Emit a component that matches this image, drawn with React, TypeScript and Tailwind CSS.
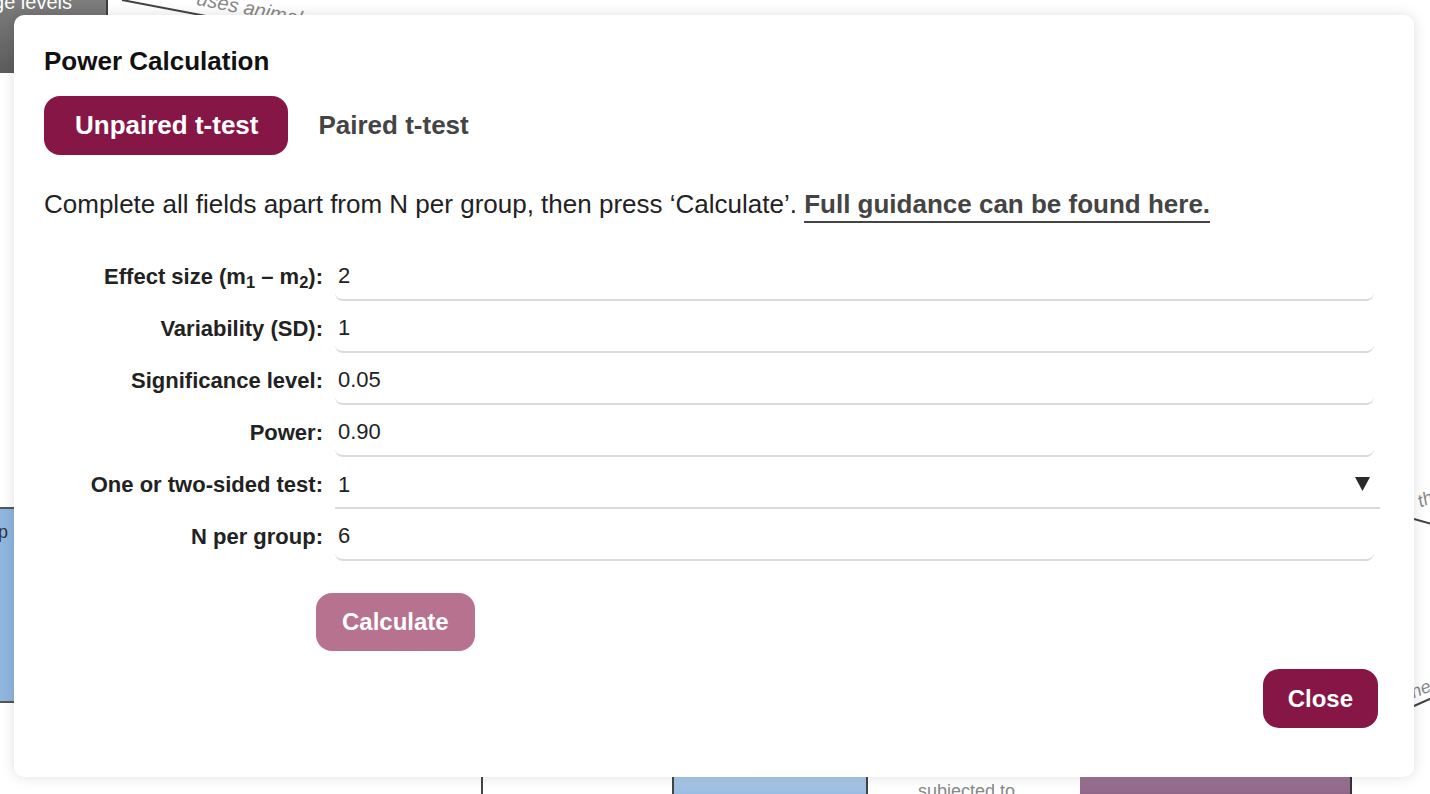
import React from "react";

const fields = [
  {
    label: (
      <>
        Effect size (m<sub>1</sub> – m<sub>2</sub>):
      </>
    ),
    value: "2",
  },
  { label: "Variability (SD):", value: "1" },
  { label: "Significance level:", value: "0.05" },
  { label: "Power:", value: "0.90" },
  { label: "One or two-sided test:", value: "1", select: true },
  { label: "N per group:", value: "6" },
];

const Backdrop = () => {
  return (
    <div className="absolute inset-0">
      {/* diagram nodes behind the dialog */}
      <div className="absolute left-0 top-[-30px] h-[103px] w-[108px] border-r-2 border-[#3f3f3f] bg-gradient-to-b from-[#8c8c8c] to-[#5c5c5c]">
        <div className="absolute left-[-50px] top-[22px] w-[122px] text-right text-[20px] leading-[20px] text-white">
          age levels
        </div>
      </div>
      <div className="absolute left-[-100px] top-[507px] h-[196px] w-[114px] border-y-2 border-[#555] bg-[#8fb6de]">
        <div className="absolute left-[40px] top-[10px] w-[68px] text-right text-[18px] text-[#333]">
          group
        </div>
      </div>
      <div className="absolute left-[672px] top-[770px] h-[40px] w-[196px] border-x-2 border-[#444] bg-gradient-to-b from-[#b2cdea] to-[#8ab2dc]" />
      <div className="absolute left-[1080px] top-[770px] h-[40px] w-[272px] border-r-2 border-[#333] bg-gradient-to-b from-[#a07c98] to-[#85587d]" />
      <div className="absolute left-[918px] top-[778px] text-[18px] text-[#888]">subjected to</div>
      <div className="absolute left-[196px] top-[-6px] rotate-[11deg] text-[20px] italic text-[#888]">
        uses animals
      </div>
      <div className="absolute left-[1418px] top-[486px] rotate-[-22deg] text-[18px] italic text-[#888]">
        th
      </div>
      <div className="absolute left-[1411px] top-[676px] rotate-[-22deg] text-[18px] italic text-[#888]">
        ne
      </div>
      <svg className="absolute inset-0" width="1430" height="794">
        <line x1="122" y1="0" x2="206" y2="16" stroke="#444" strokeWidth="2" />
        <line x1="1414" y1="519" x2="1432" y2="524" stroke="#444" strokeWidth="2" />
        <line x1="1414" y1="706" x2="1432" y2="698" stroke="#444" strokeWidth="2" />
        <line x1="482" y1="777" x2="482" y2="794" stroke="#444" strokeWidth="2" />
      </svg>
    </div>
  );
};

export default function App() {
  return (
    <div className="relative h-[794px] w-[1430px] overflow-hidden bg-white font-['Liberation_Sans',Arial,sans-serif]">
      <Backdrop />
      <div className="relative z-10 pl-[14px] pt-[15px]">
        <div className="w-[1400px] rounded-[10px] bg-white px-[30px] pb-[49px] pt-[31px] shadow-[0_0_14px_rgba(0,0,0,0.13)]">
          <h2 className="text-[26px] font-bold leading-[30px] text-[#111]">Power Calculation</h2>

          <div className="mt-[20px] flex">
            <button className="h-[59px] rounded-[16px] bg-[#861646] pl-[31px] pr-[30px] text-[26px] font-bold text-white">
              Unpaired t-test
            </button>
            <button className="h-[59px] px-[30px] text-[26px] font-bold text-[#444]">Paired t-test</button>
          </div>

          <p className="mt-[34px] text-[26px] leading-[30px] text-[#222]">
            Complete all fields apart from N per group, then press ‘Calculate’.{" "}
            <a className="border-b-2 border-[#444] pb-[2px] font-bold text-[#444]">Full guidance can be found here.</a>
          </p>

          <div className="mt-[32px] flex flex-col">
            {fields.map((f, i) => (
              <div key={i} className="flex h-[52px] items-center gap-[12px]">
                <label className="w-[279px] text-right text-[22px] font-bold leading-[26px] text-[#222]">
                  {f.label}
                </label>
                {f.select ? (
                  <div className="flex h-[48px] w-[1045px] items-center justify-between border-b-2 border-[#dcdadb] pl-[3px] pr-[10px] text-[22px] text-[#222]">
                    <span>{f.value}</span>
                    <svg width="15" height="14" viewBox="0 0 15 14">
                      <polygon points="0,0 15,0 7.5,14" fill="#2a2a2a" />
                    </svg>
                  </div>
                ) : (
                  <input
                    readOnly
                    value={f.value}
                    className="h-[48px] w-[1039px] rounded-[8px] border-b-2 border-[#dcdadb] pl-[3px] text-[22px] text-[#222] outline-none"
                  />
                )}
              </div>
            ))}
          </div>

          <div className="mt-[30px] flex">
            <button className="ml-[272px] h-[58px] rounded-[16px] bg-[#861646] px-[26px] text-[24px] font-bold text-white opacity-60">
              Calculate
            </button>
          </div>

          <div className="mt-[18px] flex justify-end pr-[6px]">
            <button className="h-[59px] rounded-[16px] bg-[#861646] px-[25px] text-[24px] font-bold text-white">
              Close
            </button>
          </div>
        </div>
      </div>
    </div>
  );
}
